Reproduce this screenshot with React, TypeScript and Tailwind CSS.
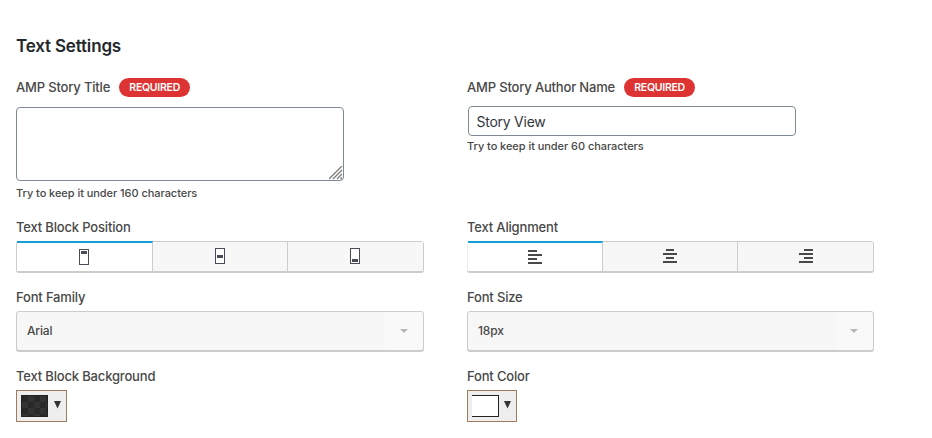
import type { ReactNode } from "react";

function Label({ children, className = "" }: { children: ReactNode; className?: string }) {
  return (
    <span
      className={`block h-5 whitespace-nowrap text-[13px] leading-[18px] font-medium tracking-[-0.17px] text-[#484848] ${className}`}
    >
      {children}
    </span>
  );
}

function Hint({ children, className = "" }: { children: ReactNode; className?: string }) {
  return (
    <p className={`text-[11px] leading-4 font-medium tracking-[-0.05px] text-[#484848] ${className}`}>{children}</p>
  );
}

function Required() {
  return (
    <span className="flex h-[19px] w-[71px] items-center justify-center rounded-full bg-[#dd3333] text-[10.5px] font-semibold tracking-[-0.26px] text-white">
      REQUIRED
    </span>
  );
}

function Segment({
  active = false,
  className = "",
  children,
}: {
  active?: boolean;
  className?: string;
  children: ReactNode;
}) {
  return (
    <button
      type="button"
      className={`flex justify-center border-r border-[#ccc] pt-[6px] last:border-r-0 ${
        active ? "-mt-px border-t-2 border-t-[#14a0d4] bg-white" : "bg-[#f7f7f7]"
      } ${className}`}
    >
      {children}
    </button>
  );
}

function PositionIcon({ y }: { y: number }) {
  return (
    <svg width="10" height="16" viewBox="0 0 10 16" shapeRendering="crispEdges">
      <rect x="0.5" y="0.5" width="9" height="15" fill="#fff" stroke="#484c55" />
      <rect x="2" y={y} width="6" height="3" fill="#484c55" />
    </svg>
  );
}

function AlignIcon({ x, width }: { x: number; width: number }) {
  return (
    <svg width="14" height="14" viewBox="0 0 14 14" fill="#484848" shapeRendering="crispEdges" className="mt-px">
      <rect x={x} y="0" width={width} height="2" />
      <rect x="0" y="4" width="14" height="2" />
      <rect x={x} y="8" width={width} height="2" />
      <rect x="0" y="12" width="14" height="2" />
    </svg>
  );
}

function Select({ value, className = "" }: { value: ReactNode; className?: string }) {
  return (
    <div
      className={`flex h-10 items-stretch justify-between rounded-[3px] border border-[#ccc] bg-[#f7f7f7] shadow-[0_1px_0_#ccc] ${className}`}
    >
      <span className="pl-[10px] text-xs leading-[38px] font-medium tracking-[-0.15px] text-[#484848]">{value}</span>
      <span className="flex w-[38px] items-center justify-center rounded-r-[3px] bg-[#f9f9f9]">
        <svg width="8" height="4" viewBox="0 0 8 4" fill="#b5b5b5">
          <path d="M0 0h8L4 4z" />
        </svg>
      </span>
    </div>
  );
}

function ColorPicker({ className, children }: { className: string; children: ReactNode }) {
  return (
    <div className={`flex h-8 border border-[#a17c5c] bg-[#eee] pt-1 pl-1 ${className}`}>
      {children}
      <svg width="7" height="8" viewBox="0 0 7 8" fill="#333" className="mt-[6px]">
        <path d="M0 0h7L3.5 7.5z" />
      </svg>
    </div>
  );
}

export default function App() {
  return (
    <main className="h-[438px] w-[932px] bg-white pt-[35px] pl-4 font-['Inter','Liberation_Sans',sans-serif]">
      <h2 className="text-[17px] leading-[22px] font-semibold tracking-[-0.17px] text-[#23282d]">Text Settings</h2>

      <div className="mt-5 grid grid-cols-[408px_407px] gap-x-[43px]">
        <section className="h-[141px]">
          <div className="flex h-[21px] items-center gap-[9px]">
            <Label>AMP Story Title</Label>
            <Required />
          </div>
          <div className="mt-[9px] flex h-[74px] w-[328px] items-end justify-end rounded border border-[#7e8993] bg-white">
            <svg width="14" height="14" viewBox="0 0 14 14" stroke="#808080" strokeWidth="1.4">
              <path d="M0 13 13 0M4 13l9-9M8 13l5-5M11.5 13l1.5-1.5" />
            </svg>
          </div>
          <Hint className="mt-1">Try to keep it under 160 characters</Hint>
        </section>
        <section className="h-[141px]">
          <div className="flex h-[21px] items-center gap-[9px]">
            <Label>AMP Story Author Name</Label>
            <Required />
          </div>
          <input
            className="mt-2 ml-px block h-[30px] w-[328px] rounded border border-[#7e8993] bg-white pr-2 pl-[7.5px] text-sm tracking-[-0.25px] text-[#32373c] outline-none"
            defaultValue="Story View"
          />
          <Hint className="mt-[2px]">Try to keep it under 60 characters</Hint>
        </section>

        <section className="h-[70px]">
          <Label>Text Block Position</Label>
          <div className="mt-[3px] flex h-[31px] rounded-[3px] border border-[#ccc] bg-[#f7f7f7] shadow-[0_1px_0_#ccc]">
            <Segment active className="w-[136px] pr-px">
              <PositionIcon y={2} />
            </Segment>
            <Segment className="w-[135px]">
              <PositionIcon y={7} />
            </Segment>
            <Segment className="w-[135px] pr-px">
              <PositionIcon y={11} />
            </Segment>
          </div>
        </section>
        <section className="h-[70px]">
          <Label>Text Alignment</Label>
          <div className="mt-[3px] flex h-[31px] rounded-[3px] border border-[#ccc] border-l-[#eee] bg-[#f7f7f7] shadow-[0_1px_0_#ccc]">
            <Segment active className="w-[135px]">
              <AlignIcon x={0} width={9} />
            </Segment>
            <Segment className="w-[135px]">
              <AlignIcon x={3} width={8} />
            </Segment>
            <Segment className="w-[135px] pl-px">
              <AlignIcon x={5} width={9} />
            </Segment>
          </div>
        </section>

        <section className="h-[79px]">
          <Label>Font Family</Label>
          <Select value="Arial" className="mt-[3px]" />
        </section>
        <section className="h-[79px]">
          <Label>Font Size</Label>
          <Select value="18px" className="mt-[3px]" />
        </section>

        <section>
          <Label>Text Block Background</Label>
          <ColorPicker className="mt-[3px] w-[51px] gap-[6px]">
            <svg width="27" height="22" viewBox="0 0 27 22" shapeRendering="crispEdges">
              <rect width="27" height="22" fill="#292929" />
              <path
                fill="#333"
                d="M7 1h6v6h-6zM19 1h6v6h-6zM1 7h6v6h-6zM13 7h6v6h-6zM25 7h1v6h-1zM7 13h6v6h-6zM19 13h6v6h-6zM1 19h6v2h-6zM13 19h6v2h-6zM25 19h1v2h-1z"
              />
              <path d="M.5.5h26v21H.5z" fill="none" stroke="#222" />
            </svg>
          </ColorPicker>
        </section>
        <section>
          <Label>Font Color</Label>
          <ColorPicker className="mt-[3px] w-[50px] gap-[5px]">
            <span className="h-[22px] w-[27px] border-y border-r border-[#222] bg-white" />
          </ColorPicker>
        </section>
      </div>
    </main>
  );
}
